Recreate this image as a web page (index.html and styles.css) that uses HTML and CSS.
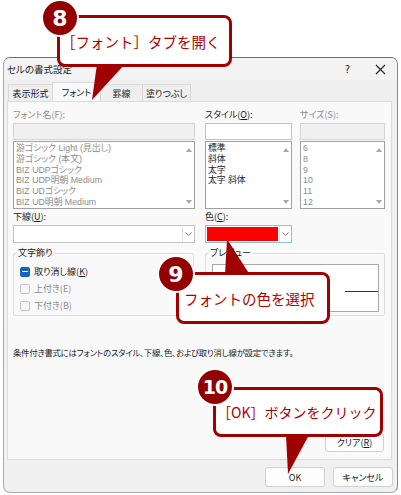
FILE: index.html
```html
<!DOCTYPE html>
<html lang="ja">
<head>
<meta charset="utf-8">
<title>セルの書式設定</title>
<link rel="stylesheet" href="styles.css">
</head>
<body>
<div class="dialog">
  <div class="titlebar">
    <span class="title">セルの書式設定</span>
    <span class="tb-btn help">?</span>
    <span class="tb-btn close">
      <svg width="11" height="11" viewBox="0 0 11 11"><path d="M1 1L10 10M10 1L1 10" stroke="#222" stroke-width="1.1"/></svg>
    </span>
  </div>
  <div class="tabs">
    <div class="tab w1">表示形式</div>
    <div class="tab w2 active">フォント</div>
    <div class="tab w3">罫線</div>
    <div class="tab w4">塗りつぶし</div>
  </div>
  <div class="panel">
    <div class="row">
      <div class="col c-font">
        <div class="label dis">フォント名(F):</div>
        <div class="input dis"></div>
        <div class="list">
          <ul class="items dis">
            <li>游ゴシック Light (見出し)</li>
            <li>游ゴシック (本文)</li>
            <li>BIZ UDPゴシック</li>
            <li>BIZ UDP明朝 Medium</li>
            <li>BIZ UDゴシック</li>
            <li>BIZ UD明朝 Medium</li>
          </ul>
          <div class="sb"><span class="up"></span><span class="down"></span></div>
        </div>
      </div>
      <div class="col c-style">
        <div class="label">スタイル(<u>O</u>):</div>
        <div class="input"></div>
        <div class="list">
          <ul class="items">
            <li>標準</li>
            <li>斜体</li>
            <li>太字</li>
            <li>太字 斜体</li>
          </ul>
          <div class="sb"><span class="up"></span><span class="down"></span></div>
        </div>
      </div>
      <div class="col c-size">
        <div class="label dis">サイズ(S):</div>
        <div class="input dis"></div>
        <div class="list">
          <ul class="items dis">
            <li>6</li>
            <li>8</li>
            <li>9</li>
            <li>10</li>
            <li>11</li>
            <li>12</li>
          </ul>
          <div class="sb"><span class="up"></span><span class="down"></span></div>
        </div>
      </div>
    </div>
    <div class="row row2">
      <div class="col c-font">
        <div class="label">下線(<u>U</u>):</div>
        <div class="select">
          <div class="fill"></div>
          <div class="chev"><svg width="7" height="4" viewBox="0 0 7 4"><path d="M0.5 0.5L3.5 3.5L6.5 0.5" fill="none" stroke="#666" stroke-width="0.9"/></svg></div>
        </div>
      </div>
      <div class="col c-style">
        <div class="label">色(<u>C</u>):</div>
        <div class="select color">
          <div class="fill red"></div>
          <div class="chev"><svg width="7" height="4" viewBox="0 0 7 4"><path d="M0.5 0.5L3.5 3.5L6.5 0.5" fill="none" stroke="#666" stroke-width="0.9"/></svg></div>
        </div>
      </div>
    </div>
    <div class="row row3">
      <fieldset class="fs deco">
        <legend>文字飾り</legend>
        <div class="chk-row"><span class="box on"></span><span>取り消し線(<u>K</u>)</span></div>
        <div class="chk-row dis"><span class="box"></span><span>上付き(E)</span></div>
        <div class="chk-row dis"><span class="box"></span><span>下付き(B)</span></div>
      </fieldset>
      <fieldset class="fs preview">
        <legend>プレビュー</legend>
        <div class="pv-box"><span class="pv-line"></span></div>
      </fieldset>
    </div>
    <p class="desc">条件付き書式にはフォントのスタイル、下線、色、および取り消し線が設定できます。</p>
    <div class="clear-row"><span class="btn clear">クリア(<u>R</u>)</span></div>
  </div>
  <div class="footer">
    <span class="btn">OK</span>
    <span class="btn">キャンセル</span>
  </div>
</div>

<svg class="tails" width="401" height="495" viewBox="0 0 401 495">
  <polygon points="97,64 125,64 92,100" fill="#a00000"/>
  <polygon points="225,275 250,275 227,239" fill="#a00000"/>
  <polygon points="286,435 309,435 288,474" fill="#a00000"/>
</svg>

<div class="callout co8">［フォント］タブを開く</div>
<div class="callout co9">フォントの色を選択</div>
<div class="callout co10">［OK］ボタンをクリック</div>

<div class="badge b8">8</div>
<div class="badge b9">9</div>
<div class="badge b10">10</div>
</body>
</html>
```
FILE: styles.css
```css
* { box-sizing: border-box; }
html, body { margin: 0; padding: 0; }
body {
  width: 401px;
  height: 495px;
  overflow: hidden;
  position: relative;
  background: #ffffff;
  font-family: "Noto Sans CJK JP", "Noto Sans", sans-serif;
  font-size: 9px;
  color: #1b1b1b;
  font-feature-settings: "palt";
}
ul { margin: 0; padding: 0; list-style: none; }
p { margin: 0; }
u { text-underline-offset: 1px; }

.dialog {
  margin: 57px 0 0 3px;
  width: 395px;
  height: 436px;
  border: 1px solid #a3acaf;
  border-top-color: #3f7d8b;
  border-right-color: #6f96a0;
  border-radius: 7px;
  background: #f0f0f0;
  display: flex;
  flex-direction: column;
  overflow: hidden;
}
.titlebar {
  height: 22px;
  flex: none;
  display: flex;
  align-items: center;
  background: #f3f3f3;
  padding-left: 3px;
}
.title { flex: 1; font-size: 9.5px; }
.tb-btn {
  width: 33px;
  height: 22px;
  display: flex;
  align-items: center;
  justify-content: center;
  font-family: "DejaVu Sans", sans-serif;
  font-size: 10px;
}

.tabs {
  height: 21px;
  flex: none;
  display: flex;
  align-items: flex-end;
  padding-left: 4px;
  background: #efefef;
}
.tab {
  height: 17px;
  border: 1px solid #d9d9d9;
  border-bottom: none;
  display: flex;
  align-items: center;
  justify-content: center;
  background: #efefef;
  margin-right: -1px;
}
.tab.active { height: 19px; background: #f9f9f9; }
.w1 { width: 45px; }
.w2 { width: 49px; }
.w3 { width: 43px; }
.w4 { width: 49px; }

.panel {
  margin-left: 3px;
  width: 385px;
  height: 359px;
  flex: none;
  border: 1px solid #dcdcdc;
  background: #f9f9f9;
  padding: 7px 6px 7px 5px;
  display: flex;
  flex-direction: column;
}
.row { display: flex; }
.col { display: flex; flex-direction: column; }
.c-font { width: 182px; }
.c-style { width: 87px; margin-left: 10px; }
.c-size { width: 85px; margin-left: 8px; }

.label { height: 12px; line-height: 12px; white-space: nowrap; }
.dis { color: #8c8c8c; }

.input {
  height: 17px;
  margin-top: 2px;
  border: 1px solid #c4c4c4;
  background: #ffffff;
}
.input.dis { background: #f0f0f0; border-color: #d4d4d4; }

.list {
  height: 68px;
  margin-top: 1px;
  border: 1px solid #a0a0a0;
  background: #ffffff;
  display: flex;
}
.items {
  flex: 1;
  padding: 1px 0 0 2px;
  white-space: nowrap;
  font-family: "Liberation Sans", "Noto Sans CJK JP", sans-serif;
  font-size: 8.8px;
}
.items li { height: 10.8px; line-height: 10.8px; }
.sb {
  width: 11px;
  display: flex;
  flex-direction: column;
  justify-content: space-between;
  align-items: center;
  padding: 6px 0 4px;
}
.up, .down { width: 0; height: 0; border-left: 3px solid transparent; border-right: 3px solid transparent; }
.up { border-bottom: 4px solid #a8a8a8; }
.down { border-top: 4px solid #a8a8a8; }

.row2 { margin-top: 2px; }
.select {
  height: 18px;
  margin-top: 2px;
  border: 1px solid #c4c4c4;
  background: #ffffff;
  display: flex;
}
.select .fill { flex: 1; }
.select .chev {
  width: 12px;
  border-left: 1px solid #e2e2e2;
  display: flex;
  align-items: center;
  justify-content: center;
}
.select.color { border-color: #8fc3dc; }
.select .red { background: #ff0000; margin: 1px; }

.row3 { margin-top: 4px; align-items: flex-start; }
.fs {
  margin: 0;
  border: 1px solid #dcdcdc;
  border-radius: 2px;
  min-width: 0;
}
.fs legend { padding: 0 2px; line-height: 12px; margin-left: -4px; }
.deco { width: 182px; height: 69px; padding: 4px 6px 0 6px; }
.chk-row { height: 17px; display: flex; align-items: center; gap: 4px; }
.box {
  width: 10px;
  height: 10px;
  border: 1px solid #c6c6c6;
  border-radius: 2px;
  background: #f6f6f6;
  display: flex;
  align-items: center;
  justify-content: center;
}
.box.on { background: #1465b8; border-color: #1465b8; }
.box.on::after { content: ""; width: 6px; height: 1.5px; background: #ffffff; }

.preview { width: 181px; height: 69px; margin-left: 11px; padding: 5px 5px 3px 6px; }
.pv-box {
  height: 48px;
  border: 1px solid #a8a8a8;
  background: #ffffff;
  display: flex;
  justify-content: flex-end;
  align-items: center;
}
.pv-line { width: 33px; height: 1px; background: #333333; margin-top: 6px; }

.desc { margin-top: 30px; line-height: 12px; white-space: nowrap; font-size: 8.4px; letter-spacing: -0.25px; }

.clear-row { margin-top: auto; display: flex; justify-content: flex-end; padding-right: 1px; }
.btn {
  width: 60px;
  height: 20px;
  border: 1px solid #d0d0d0;
  border-radius: 3px;
  background: #fdfdfd;
  display: flex;
  align-items: center;
  justify-content: center;
}
.clear { width: 59px; height: 19px; }

.footer {
  flex: 1;
  display: flex;
  justify-content: flex-end;
  align-items: flex-start;
  gap: 8px;
  padding: 7px 4px 0 0;
}

.tails { position: absolute; left: 0; top: 0; pointer-events: none; }

.callout {
  position: absolute;
  border: 3px solid #a00000;
  border-radius: 8px;
  background: #ffffff;
  color: #b00000;
  font-size: 14.5px;
  font-feature-settings: normal;
  display: flex;
  align-items: center;
  white-space: nowrap;
}
.co8 { left: 57px; top: 15px; width: 175px; height: 52px; padding-left: 1px; }
.co9 { left: 176px; top: 272px; width: 154px; height: 52px; padding-left: 5px; }
.co10 { left: 213px; top: 387px; width: 170px; height: 50px; padding-left: 1px; font-size: 14px; }

.badge {
  position: absolute;
  width: 34px;
  height: 34px;
  border-radius: 50%;
  background: #930000;
  color: #ffffff;
  box-shadow: 0 0 0 2px #ffffff;
  font-family: "DejaVu Sans", sans-serif;
  font-weight: bold;
  font-size: 22px;
  display: flex;
  align-items: center;
  justify-content: center;
}
.b8 { left: 43px; top: 1px; }
.b9 { left: 159px; top: 257px; }
.b10 { left: 198px; top: 370px; font-size: 19px; letter-spacing: -1px; }
```
